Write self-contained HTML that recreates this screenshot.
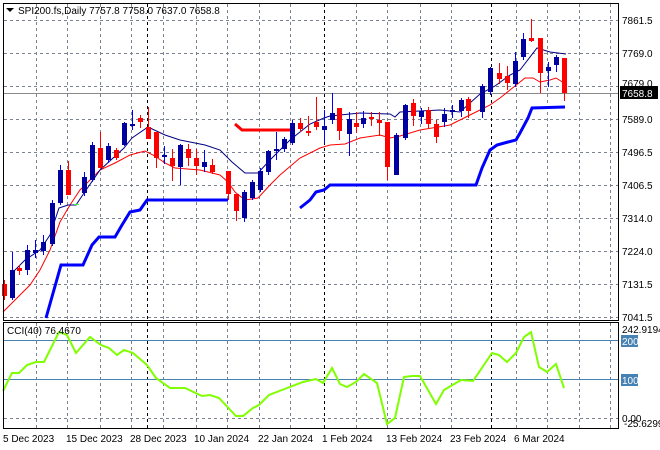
<!DOCTYPE html>
<html><head><meta charset="utf-8"><style>
html,body{margin:0;padding:0;background:#fff;width:660px;height:450px;overflow:hidden}
svg text{font-family:"Liberation Sans",sans-serif;font-size:10px;fill:#000}
</style></head><body>
<svg id="s" width="660" height="450" xmlns="http://www.w3.org/2000/svg">
<g id="grid" stroke="#7a8290" stroke-width="1" stroke-dasharray="3,3"></g>
<g id="vb" stroke="#000" stroke-width="1" stroke-dasharray="3,3"></g>
<line x1="3" y1="93.5" x2="618" y2="93.5" stroke="#8a8a8a"/>
<line x1="3" y1="340.5" x2="618" y2="340.5" stroke="#4682b4"/>
<line x1="3" y1="379.5" x2="618" y2="379.5" stroke="#4682b4"/>
<polyline fill="none" stroke="#ff0000" stroke-width="1" points="3,312 17,298 30,285 40,270 50,250 60,222 70,205 80,190 100,170 115,163 130,155 145,151 155,156 165,163 175,168 200,170 220,175 228,182 235,192 245,200 258,198 270,185 280,175 300,158 320,148 330,145 345,144 360,138 380,135 390,138 400,136 420,130 450,125 460,120 480,110 490,105 500,98 510,90 525,78 533,78 540,82 550,80 556,78 564,83"/>
<polyline fill="none" stroke="#000080" stroke-width="1" points="10,275 25,260 40,250 50,235 59,208 68,205 76,205 84,193 100,170 124,148 132,138 148,127 165,135 180,140 205,145 220,150 232,162 245,173 258,173 270,160 290,140 310,124 324,118 330,116 360,113 390,114 395,117 400,112 440,110 460,112 480,94 495,86 510,75 520,70 537,48 550,52 566,54"/>
<polyline fill="none" stroke="#0000ff" stroke-width="3" points="46,318 61,265 83,265 92,245 99,237 115,237 122,225 130,212 140,210 147,200 228,200"/>
<polyline fill="none" stroke="#0000ff" stroke-width="3" points="300,208 310,200 316,192 324,190 330,185 476,185 482,168 490,150 497,145 508,142 516,140 520,133 528,118 532,108 565,107"/>
<polyline fill="none" stroke="#ff0000" stroke-width="3" points="235,124 242,130 292,130"/>
<g id="c"></g>
<polyline fill="none" stroke="#7fff00" stroke-width="2" points="3,391 12,373 19,373 27,365 36,362 44,362 59,332 67,335 76,353 90,337 101,345 109,348 117,355 124,350 133,353 147,365 156,378 170,388 185,388 202,396 210,395 219,398 236,416 243,416 253,408 259,405 269,395 282,390 303,382 316,379 323,383 332,368 340,384 347,387 356,382 364,374 377,383 387,424 395,418 404,377 412,376 420,376 436,404 444,390 461,380 473,381 492,353 499,355 507,362 516,353 524,337 531,332 539,367 547,372 556,364 564,388"/>
<rect x="3.5" y="3.5" width="615" height="317" fill="none" stroke="#000"/>
<rect x="3.5" y="322.5" width="615" height="106" fill="none" stroke="#000"/>
<path d="M6,8 L14,8 L10,12 Z" fill="#000"/>
<text x="18" y="14">SPI200.fs,Daily  7757.8 7758.0 7637.0 7658.8</text>
<text x="7" y="334">CCI(40) 76.4670</text>
<g id="lab"></g>
<rect x="620" y="86" width="38" height="13" fill="#000"/>
<text x="622" y="97" style="fill:#fff">7658.8</text>
<rect x="621" y="335" width="17" height="12" fill="#4682b4"/>
<text x="622" y="345" style="fill:#fff">200</text>
<rect x="621" y="374" width="17" height="12" fill="#4682b4"/>
<text x="622" y="384" style="fill:#fff">100</text>
<text x="622" y="333">242.9194</text>
<text x="622" y="422">0.00</text>
<text x="624" y="427">-25.6299</text>
<g id="d"></g>
</svg>
<script>
var ns="http://www.w3.org/2000/svg";
function el(p,t,a,txt){var e=document.createElementNS(ns,t);for(var k in a)e.setAttribute(k,a[k]);if(txt)e.textContent=txt;document.getElementById(p).appendChild(e);}
var hy=[20,53,86,119,152,185,218,251,284,317];
hy.forEach(function(y){el("grid","line",{x1:4,x2:618,y1:y+.5,y2:y+.5});});
el("grid","line",{x1:4,x2:618,y1:418.5,y2:418.5});
var gx=[36,67,100,131,163,196,227,259,290,356,387,420,451,516,547,579,610];
gx.forEach(function(x){el("grid","line",{x1:x+.5,x2:x+.5,y1:4,y2:320});el("grid","line",{x1:x+.5,x2:x+.5,y1:323,y2:428});});
[147,324,491].forEach(function(x){el("vb","line",{x1:x+.5,x2:x+.5,y1:4,y2:320});el("vb","line",{x1:x+.5,x2:x+.5,y1:323,y2:428});});
var labs=["7861.5","7769.0","7679.0","7589.0","7496.5","7406.5","7314.0","7224.0","7131.5","7041.5"];
labs.forEach(function(t,i){if(i!=2)el("lab","text",{x:622,y:hy[i]+4},t);else el("lab","text",{x:622,y:hy[i]+1},t);});
var dates=[[3,"5 Dec 2023"],[66,"15 Dec 2023"],[130,"28 Dec 2023"],[194,"10 Jan 2024"],[258,"22 Jan 2024"],[322,"1 Feb 2024"],[386,"13 Feb 2024"],[450,"23 Feb 2024"],[514,"6 Mar 2024"]];
dates.forEach(function(d){el("d","text",{x:d[0],y:442},d[1]);});
var C=[[4,'r',284,296,280,300],[12,'b',270,298,252,300],[19,'r',268,271,265,275],[27,'b',250,270,245,275],[35,'b',250,253,240,258],[43,'b',242,251,235,255],[52,'b',203,244,200,246],[60,'b',170,203,165,205],[68,'r',170,195,161,195],[76,'g',204,205,204,205],[84,'b',177,193,172,196],[92,'b',145,180,142,182],[100,'r',148,168,132,168],[108,'b',146,160,143,163],[116,'r',150,158,148,160],[124,'b',123,145,122,146],[132,'b',124,126,110,130],[140,'r',118,122,115,128],[148,'r',127,139,107,139],[156,'r',132,158,132,168],[164,'b',155,157,146,164],[172,'r',158,166,149,181],[180,'b',145,167,144,185],[188,'r',149,158,144,166],[196,'r',158,166,149,175],[204,'b',162,167,150,172],[212,'r',165,172,159,174],[228,'r',171,194,171,200],[236,'r',194,211,194,221],[244,'b',192,218,190,222],[252,'b',182,198,180,200],[260,'b',171,190,168,192],[268,'b',151,172,150,175],[276,'b',149,151,132,160],[284,'b',139,149,137,152],[292,'b',123,143,120,145],[300,'r',123,129,118,132],[308,'r',131,133,116,136],[316,'r',122,127,97,130],[324,'b',126,130,110,143],[332,'b',113,120,93,124],[339,'r',108,131,108,140],[349,'b',119,134,112,156],[356,'r',123,127,112,133],[363,'b',118,124,111,128],[371,'r',117,119,112,126],[379,'r',120,123,112,136],[387,'r',122,167,122,180],[396,'b',135,175,133,175],[405,'b',105,138,104,140],[413,'r',103,116,99,126],[421,'b',111,117,108,124],[428,'r',110,124,107,128],[436,'r',124,137,120,143],[444,'b',114,122,108,127],[452,'b',110,112,105,118],[461,'b',100,111,98,117],[468,'r',99,111,97,118],[482,'b',86,112,84,118],[490,'b',68,92,67,95],[499,'r',73,79,63,84],[507,'r',76,83,66,90],[515,'b',61,84,52,87],[523,'b',39,57,33,60],[531,'r',38,41,19,42],[540,'r',38,73,38,93],[548,'b',67,71,62,87],[556,'b',57,65,55,72],[564,'r',58,93,58,101]];
C.forEach(function(c){var col=c[1]=='r'?'#ff0000':(c[1]=='g'?'#33ff33':'#0000a0');var wc=c[1]=='r'?'#ff0000':(c[1]=='g'?'#33ff33':'#0000ff');
el("c","line",{x1:c[0]+.5,x2:c[0]+.5,y1:c[4],y2:c[5],stroke:wc});
el("c","rect",{x:c[0]-2,y:c[2],width:5,height:Math.max(1,c[3]-c[2]),fill:col});});
</script>
</body></html>
